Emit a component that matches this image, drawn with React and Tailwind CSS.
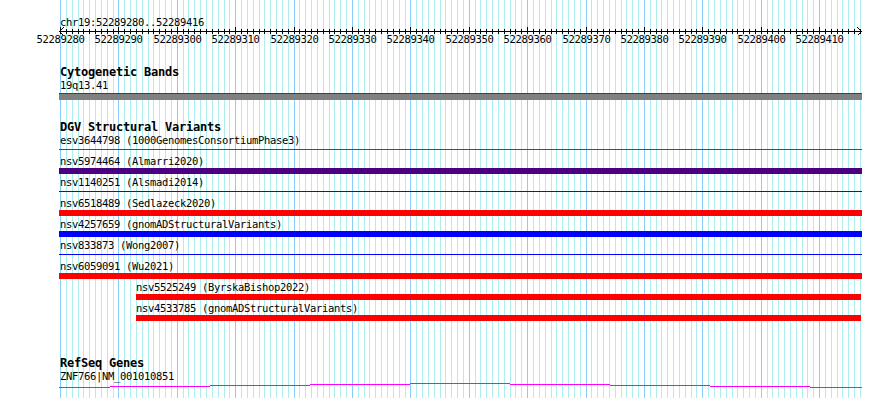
import React from "react";

const STEP = 800 / 137;
const gridXs = Array.from({ length: 138 }, (_, i) => Math.round(60 + i * STEP));

const rows = [
  { label: "esv3644798 (1000GenomesConsortiumPhase3)", color: "#ff0000", thin: true },
  { label: "nsv5974464 (Almarri2020)", color: "#4b0082" },
  { label: "nsv1140251 (Alsmadi2014)", color: "#4b0082", thin: true },
  { label: "nsv6518489 (Sedlazeck2020)", color: "#ff0000" },
  { label: "nsv4257659 (gnomADStructuralVariants)", color: "#0000ff" },
  { label: "nsv833873 (Wong2007)", color: "#0000ff", thin: true },
  { label: "nsv6059091 (Wu2021)", color: "#ff0000" },
  { label: "nsv5525249 (ByrskaBishop2022)", color: "#ff0000", indent: true },
  { label: "nsv4533785 (gnomADStructuralVariants)", color: "#ff0000", indent: true },
];

const geneSteps = [
  [59, 110, 4],
  [110, 210, 3],
  [210, 310, 2],
  [310, 410, 1],
  [410, 510, 0],
  [510, 610, 1],
  [610, 710, 2],
  [710, 810, 3],
  [810, 862, 4],
];

const Grid = () => (
  <svg className="absolute inset-0" width="890" height="398" shapeRendering="crispEdges">
    {gridXs.map((x, i) => (
      <rect key={i} x={x} y="0" width="1" height="398" fill={i % 10 === 0 ? "#87cefa" : "#afeeee"} />
    ))}
  </svg>
);

const Ruler = () => (
  <div className="relative ml-[59px] mt-[16px] h-[36px] w-[803px]">
    <div className="pl-px text-[10.5px] leading-[13px] tracking-[-0.32px] whitespace-nowrap">
      chr19:52289280..52289416
    </div>
    <svg className="absolute left-0 top-[11px]" width="803" height="9" shapeRendering="crispEdges">
      <rect x="0" y="4" width="803" height="1" fill="#000" />
      {gridXs.map((x, i) => (
        <rect
          key={i}
          x={x - 59}
          y={i % 10 === 0 ? 0 : 2}
          width="1"
          height={i % 10 === 0 ? 7 : 5}
          fill="#000"
        />
      ))}
      <path d="M0.5 4.5 L4.5 0.5 M0.5 4.5 L4.5 8.5" stroke="#000" fill="none" />
      <path d="M802.5 4.5 L798.5 0.5 M802.5 4.5 L798.5 8.5" stroke="#000" fill="none" />
    </svg>
    {gridXs
      .filter((_, i) => i % 10 === 0)
      .map((x, k) => (
        <span
          key={k}
          className="absolute top-[17px] -translate-x-1/2 text-[10.5px] leading-[13px] tracking-[-0.32px] whitespace-nowrap"
          style={{ left: x - 59 + 0.5 }}
        >
          {52289280 + k * 10}
        </span>
      ))}
  </div>
);

const Header = ({ children, className = "" }) => (
  <div className={`pl-px text-[12px] font-bold leading-[13px] tracking-[-0.22px] whitespace-nowrap ${className}`}>
    {children}
  </div>
);

const Label = ({ children, className = "" }) => (
  <div className={`text-[10.5px] leading-[13px] tracking-[-0.32px] whitespace-nowrap ${className}`}>
    {children}
  </div>
);

const VariantRow = ({ label, color, thin, indent }) => (
  <div className={`flex h-[21px] flex-col ${indent ? "ml-[77px] w-[725px]" : "w-[803px]"}`}>
    <Label className={indent ? "" : "pl-px"}>{label}</Label>
    <div className="flex h-[6px] flex-col">
      {thin ? (
        <div className="mt-[2px] h-px w-full" style={{ backgroundColor: color }} />
      ) : (
        <div className="h-[6px] w-full" style={{ backgroundColor: color }} />
      )}
    </div>
  </div>
);

export default function App() {
  return (
    <div className="relative h-[398px] w-[890px] overflow-hidden bg-white font-['DejaVu_Sans_Mono',monospace] text-black">
      <Grid />
      <div className="relative flex flex-col">
        <Ruler />

        <div className="ml-[59px] mt-[14px] flex w-[803px] flex-col">
          <Header>Cytogenetic Bands</Header>
          <Label className="pl-px">19q13.41</Label>
          <div className="mt-px h-[7px] w-full border-t border-[#404040] bg-[#808080]" />
        </div>

        <div className="ml-[59px] mt-[21px] flex w-[803px] flex-col">
          <Header>DGV Structural Variants</Header>
          {rows.map((r) => (
            <VariantRow key={r.label} {...r} />
          ))}
        </div>

        <div className="ml-[59px] mt-[34px] flex w-[803px] flex-col">
          <Header>RefSeq Genes</Header>
          <Label className="pl-px">ZNF766|NM_001010851</Label>
          <svg width="803" height="5" shapeRendering="crispEdges">
            {geneSteps.map(([a, b, y], i) => (
              <rect key={i} x={a - 59} y={y} width={b - a} height="1" fill="#ff00ff" />
            ))}
          </svg>
        </div>
      </div>
    </div>
  );
}
